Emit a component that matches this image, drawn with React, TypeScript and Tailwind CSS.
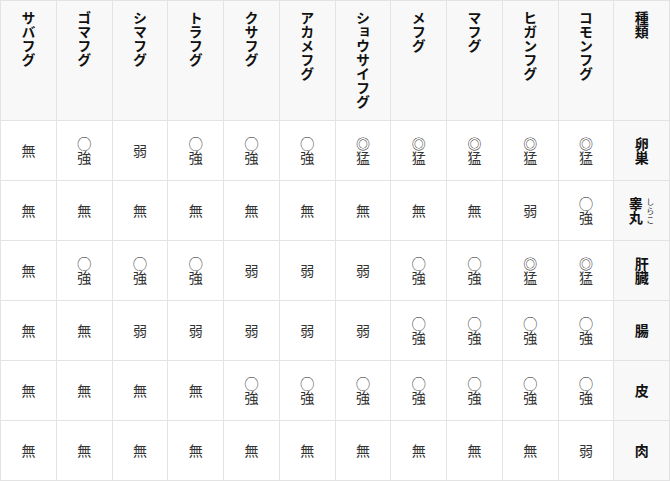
import React from 'react';

const species = [
  'サバフグ',
  'ゴマフグ',
  'シマフグ',
  'トラフグ',
  'クサフグ',
  'アカメフグ',
  'ショウサイフグ',
  'メフグ',
  'マフグ',
  'ヒガンフグ',
  'コモンフグ',
];

// n = 無, w = 弱, s = ◯強, m = ◎猛
const rows: { part: string; ruby?: string; values: string }[] = [
  { part: '卵巣', values: 'nswsssmmmmm' },
  { part: '睾丸', ruby: 'しらこ', values: 'nnnnnnnnnws' },
  { part: '肝臓', values: 'nssswwwssmm' },
  { part: '腸', values: 'nnwwwwwssss' },
  { part: '皮', values: 'nnnnsssssss' },
  { part: '肉', values: 'nnnnnnnnnnw' },
];

const labels: Record<string, string> = {
  n: '無',
  w: '弱',
  s: '◯強',
  m: '◎猛',
};

function Cell({ v }: { v: string }) {
  return (
    <div className="flex items-center justify-center border-r border-b border-[#e3e3e3] bg-white">
      <span className="[writing-mode:vertical-rl] text-[14px] leading-[16px] text-[#333]">
        {labels[v]}
      </span>
    </div>
  );
}

export default function App() {
  return (
    <div className="w-[670px] h-[481px] bg-white font-['Noto_Sans_CJK_JP','Noto_Sans',sans-serif]">
      <div className="grid grid-cols-12 grid-rows-[120px_repeat(6,60px)] border-t border-l border-[#e3e3e3]">
        {species.map((name) => (
          <div
            key={name}
            className="flex justify-center pt-[10px] border-r border-b border-[#e3e3e3] bg-[#f8f8f8]"
          >
            <span className="[writing-mode:vertical-rl] text-[14px] leading-[16px] font-bold text-[#111]">
              {name}
            </span>
          </div>
        ))}
        <div className="flex justify-center pt-[10px] border-r border-b border-[#e3e3e3] bg-[#f8f8f8]">
          <span className="[writing-mode:vertical-rl] text-[14px] leading-[16px] font-bold text-[#111]">
            種類
          </span>
        </div>

        {rows.map((row) => (
          <React.Fragment key={row.part}>
            {row.values.split('').map((v, i) => (
              <Cell key={i} v={v} />
            ))}
            <div className="flex items-center justify-center border-r border-b border-[#e3e3e3] bg-[#f8f8f8]">
              <span className="[writing-mode:vertical-rl] text-[14px] leading-[16px] font-bold text-[#111]">
                {row.ruby ? (
                  <ruby>
                    {row.part}
                    <rt className="text-[8px] font-normal text-[#333] pl-[2px]">{row.ruby}</rt>
                  </ruby>
                ) : (
                  row.part
                )}
              </span>
            </div>
          </React.Fragment>
        ))}
      </div>
    </div>
  );
}
